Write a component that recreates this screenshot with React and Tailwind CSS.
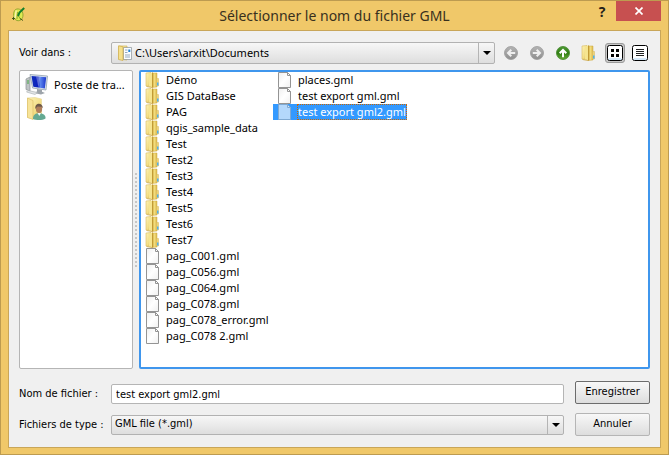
import React, { useState } from "react";

const folders = ["Démo", "GIS DataBase", "PAG", "qgis_sample_data", "Test", "Test2", "Test3", "Test4", "Test5", "Test6", "Test7"];
const files = ["pag_C001.gml", "pag_C056.gml", "pag_C064.gml", "pag_C078.gml", "pag_C078_error.gml", "pag_C078 2.gml"];
const moreFiles = ["places.gml", "test export gml.gml", "test export gml2.gml"];

function Gradients() {
  return (
    <svg className="absolute size-0" aria-hidden="true">
      <defs>
        <linearGradient id="gold" x1="0" x2="1" y1="0" y2="1">
          <stop offset="0" stopColor="#fdf3ba" />
          <stop offset="0.6" stopColor="#f3de85" />
          <stop offset="1" stopColor="#dcb84c" />
        </linearGradient>
        <linearGradient id="goldBack" x1="0" x2="1" y1="0" y2="0">
          <stop offset="0" stopColor="#c9a233" />
          <stop offset="0.5" stopColor="#f2dc7c" />
          <stop offset="1" stopColor="#d9b64a" />
        </linearGradient>
        <linearGradient id="paper" x1="0" x2="1" y1="0" y2="1">
          <stop offset="0" stopColor="#efefef" />
          <stop offset="0.5" stopColor="#ffffff" />
          <stop offset="1" stopColor="#f0f0f0" />
        </linearGradient>
        <linearGradient id="screen" x1="0" x2="1" y1="0" y2="0">
          <stop offset="0" stopColor="#1230b8" />
          <stop offset="0.45" stopColor="#0a1fc0" />
          <stop offset="0.6" stopColor="#5c86ee" />
          <stop offset="1" stopColor="#1a35cc" />
        </linearGradient>
        <linearGradient id="greyBall" x1="0" x2="0" y1="0" y2="1">
          <stop offset="0" stopColor="#b4b4b4" />
          <stop offset="1" stopColor="#8e8e8e" />
        </linearGradient>
        <linearGradient id="greenBall" x1="0" x2="0" y1="0" y2="1">
          <stop offset="0" stopColor="#4f9a35" />
          <stop offset="0.5" stopColor="#2f7d12" />
          <stop offset="1" stopColor="#69ab3a" />
        </linearGradient>
      </defs>
    </svg>
  );
}

function FolderIcon() {
  return (
    <svg viewBox="0 0 16 16" className="size-4 shrink-0" aria-hidden="true">
      <path d="M1 1 6 .5v14L1 14z" fill="url(#gold)" stroke="#d8bb5c" strokeWidth=".6" />
      <path d="M7 1h5v14l-5 .5z" fill="url(#goldBack)" stroke="#cfa940" strokeWidth=".5" />
      <path d="M11.500 6.500h2V14h-2z" fill="#ecd47a" stroke="#d6b65a" strokeWidth=".5" />
      <path d="M4 1.500 7.500 .5V15L4 14.500z" fill="#f6e590" />
      <path d="M7.500 .5V15.500" stroke="#bd9430" strokeWidth=".9" />
      <path d="M1.500 14.500 7 15.500" stroke="#cda845" strokeWidth=".8" />
      <path d="M12 10.500h1.500v3H12z" fill="#4db0ee" />
    </svg>
  );
}

function FileIcon({ selected = false }) {
  const edge = selected ? "#7fa9d2" : "#949494";
  return (
    <svg viewBox="0 0 16 16" className="size-4 shrink-0" aria-hidden="true">
      <path d="M1.500.5h9l3 3v12h-12z" fill={selected ? "#b4d8fc" : "url(#paper)"} stroke={edge} />
      <path d="M10.500.5v3h3z" fill={selected ? "#d2e8fe" : "#fff"} stroke={edge} />
    </svg>
  );
}

function DocumentsIcon() {
  return (
    <svg viewBox="0 0 16 16" className="size-4" aria-hidden="true">
      <path d="M2 1h8v14l-8-1z" fill="url(#gold)" stroke="#d3b456" strokeWidth=".7" />
      <path d="M6.500 2.500h8v12h-8z" fill="#fafdff" stroke="#8a9298" strokeWidth=".7" />
      <path d="M8 5h2.500M8 7.500h2.500M8 10h5M8 12h5" stroke="#8aa0b5" strokeWidth=".9" />
      <path d="M11.300 4.500h2v2.500h-2z" fill="#2385d5" />
      <path d="M1.500.8l4.500 1V15.500L1.500 14.500z" fill="#f5e08c" stroke="#cfac48" strokeWidth=".7" />
    </svg>
  );
}

function ComputerIcon() {
  return (
    <svg viewBox="0 0 24 24" className="size-6 shrink-0" aria-hidden="true">
      <path d="M1 6 5 4v14l-4-1.500z" fill="#bfc4c6" stroke="#8b9194" strokeWidth=".7" />
      <path d="M2 8h2M2 10h2" stroke="#43a640" />
      <path d="M5 1.500 22.500 3 21 17 7.500 15z" fill="#dbe3ed" stroke="#8796a6" strokeWidth=".7" />
      <path d="M6.500 3 21.200 4.300 19.800 15.400 8.300 13.700z" fill="url(#screen)" />
      <path d="M11 3.400 15.500 3.800 13.500 14.500z" fill="#fff" opacity=".3" />
      <path d="M12 16l5 .8v2l3 1.200-4 1.500-7-1.500 3-1.500z" fill="#9da4aa" />
      <path d="M3 17.500 12.500 19.500 10 21.500 1.500 19z" fill="#e2e5e7" stroke="#a5abad" strokeWidth=".6" />
    </svg>
  );
}

function UserIcon() {
  return (
    <svg viewBox="0 0 24 24" className="size-6 shrink-0" aria-hidden="true">
      <path d="M2.500 1 10 .5 16.500 2v17l-6.500 3-7.500-1.500z" fill="url(#gold)" stroke="#e8d794" strokeWidth=".6" />
      <path d="M2.500 1 8 3.500v19l-5.500-2z" fill="#f7e398" stroke="#d8ba60" strokeWidth=".6" />
      <path d="M8 22c-.3-4 2.300-5.800 6-5.800s7 1.600 6.500 5.300c-3 2-9 2-12.500.5z" fill="#64a992" />
      <path d="M12.500 16l1.800 3 1.700-3z" fill="#f4f7f5" />
      <ellipse cx="14" cy="12" rx="3.100" ry="4" fill="#b07f5b" />
      <path d="M10.400 12c-1.200-6.500 7.600-7 7.400-.5l-1.300-1.700-4-.3-1 1z" fill="#6d5849" />
    </svg>
  );
}

function AppIcon() {
  return (
    <svg viewBox="0 0 16 16" className="size-4" aria-hidden="true">
      <path d="M4.500 2.500C8 .8 12 3 12 8c0 4-3 6.500-6 5.500C2 12.500 1.500 5 4.500 2.500z" fill="#dcea52" stroke="#8fa22c" strokeWidth=".9" />
      <path d="M5.200 3.500 4 11" stroke="#f8f5b4" strokeWidth="1.400" />
      <path d="M6.500 5 6 12M7.500 9l2.500 4" stroke="#8fa22c" strokeWidth=".9" />
      <path d="M13.200 1 8.500 5.500 7 9" fill="none" stroke="#12802a" strokeWidth="2" />
      <path d="M1 11.500h3M2.500 10v3M9 11.500l3 2" stroke="#3b5214" strokeWidth=".9" />
    </svg>
  );
}

function ArrowBall({ direction }) {
  const turn = { left: "rotate(-90 8 8)", right: "rotate(90 8 8)", up: "rotate(0 8 8)" }[direction];
  const green = direction === "up";
  return (
    <svg viewBox="0 0 16 16" className="size-4" aria-hidden="true">
      <circle cx="8" cy="8" r="6.500" fill={green ? "url(#greenBall)" : "url(#greyBall)"} stroke={green ? "#3f8526" : "#9a9a9a"} strokeWidth=".8" />
      <path d="M8 12.200V5M4.700 8.300 8 5 11.300 8.300" transform={turn} fill="none" stroke={green ? "#fff" : "#efefef"} strokeWidth="2" />
    </svg>
  );
}

function Entry({ name, folder, selected, onSelect }) {
  return (
    <li className="flex">
      <button type="button" onClick={() => onSelect(name)} aria-pressed={selected} className={`flex h-4 items-center gap-1 pl-1 text-left ${selected ? "bg-[#3399ff] text-white" : ""}`}>
        {folder ? <FolderIcon /> : <FileIcon selected={selected} />}
        <span className={`h-4 px-px leading-4 whitespace-nowrap ${selected ? "outline-1 -outline-offset-1 outline-dotted outline-[#cc6600]" : ""}`}>{name}</span>
      </button>
    </li>
  );
}

function DropArrow() {
  return (
    <span className="pointer-events-none absolute inset-y-0 right-0 flex w-4 items-center justify-center border-l border-[#b4b4b4]">
      <svg viewBox="0 0 8 4" className="h-1 w-2" aria-hidden="true"><path d="M0 0h8L4 4z" fill="#000" /></svg>
    </span>
  );
}

const combo = "relative flex min-w-0 flex-1 items-center rounded-[2px] border border-[#b2b2b2] bg-linear-to-b from-[#f7f7f7] to-[#dedede]";
const toolButton = "flex w-[26px] justify-center";

export default function App() {
  const [name, setName] = useState("test export gml2.gml");
  const all = [...folders, ...files];
  return (
    <div className="flex min-h-screen flex-col border border-[#bd9b50] bg-[#f0c869] px-[7px] pb-[6px] font-['DejaVu_Sans_Condensed','DejaVu_Sans',sans-serif] text-[11px] text-black">
      <Gradients />
      <header className="flex h-[29px] shrink-0 items-start">
        <div className="flex w-20 pt-[6px] pl-[3px]"><AppIcon /></div>
        <h1 className="flex-1 text-center font-['Noto_Sans','Open_Sans',sans-serif] text-[14px] leading-[29px] text-[#38301e]">Sélectionner le nom du fichier GML</h1>
        <div className="flex w-20 justify-end">
          <button type="button" aria-label="Aide" className="flex h-5 w-7 items-center justify-center font-['Open_Sans',sans-serif] text-[14px] font-bold text-[#24201a]">?</button>
          <button type="button" aria-label="Fermer" className="flex h-5 w-[45px] items-center justify-center bg-[#c75050]">
            <svg viewBox="0 0 8 8" className="size-2" aria-hidden="true"><path d="M.5.5l7 7m0-7l-7 7" stroke="#fff" strokeWidth="1.700" /></svg>
          </button>
        </div>
      </header>
      <main className="flex flex-1 flex-col border border-[#c9a659] bg-[#f0f0f0] px-[10px] py-[11px]">
        <div className="flex h-[22px] items-center">
          <label htmlFor="place" className="w-[92px] shrink-0">Voir dans :</label>
          <div className={`h-[22px] ${combo}`}>
            <span className="ml-[5px] flex"><DocumentsIcon /></span>
            <select id="place" className="h-full min-w-0 flex-1 appearance-none bg-transparent pl-[2px] pr-5 font-['Noto_Sans','Open_Sans',sans-serif]">
              <option>C:\Users\arxit\Documents</option>
            </select>
            <DropArrow />
          </div>
          <div className="ml-[3px] flex shrink-0 items-center">
            <button type="button" aria-label="Précédent" className={toolButton}><ArrowBall direction="left" /></button>
            <button type="button" aria-label="Suivant" className={toolButton}><ArrowBall direction="right" /></button>
            <button type="button" aria-label="Dossier parent" className={toolButton}><ArrowBall direction="up" /></button>
            <button type="button" aria-label="Nouveau dossier" className={toolButton}><FolderIcon /></button>
            <button type="button" aria-label="Liste" aria-pressed="true" className="ml-[3px] flex size-5 items-center justify-center rounded-[3px] border border-[#9a9a9a] bg-[#c8c8c8]">
              <svg viewBox="0 0 16 16" className="size-4" aria-hidden="true"><rect x=".5" y=".5" width="15" height="15" rx="2" fill="#fff" stroke="#000" /><path d="M1.500 14h13" stroke="#acd3f4" /><path d="M4 4h3v3H4zm5 0h3v3H9zM4 9h3v3H4zm5 0h3v3H9z" /></svg>
            </button>
            <button type="button" aria-label="Détails" className="ml-[5px] flex size-5 items-center justify-center">
              <svg viewBox="0 0 16 16" className="size-4" aria-hidden="true"><rect x=".5" y=".5" width="15" height="15" rx="2" fill="#fff" stroke="#000" /><path d="M1.500 14h13" stroke="#acd3f4" /><path d="M4 4.500h8M4 6.500h8M4 8.500h8M4 10.500h8" stroke="#222" /></svg>
            </button>
          </div>
        </div>
        <div className="mt-[6px] flex flex-1 font-['Noto_Sans','Open_Sans',sans-serif] text-[11px]">
          <nav className="w-[114px] shrink-0 rounded-[2px] border border-[#b5b5b5] bg-white px-[5px] py-[2px]">
            <button type="button" className="flex h-6 w-full items-center gap-[5px] whitespace-nowrap"><ComputerIcon />Poste de tra...</button>
            <button type="button" className="flex h-6 w-full items-center gap-[5px] whitespace-nowrap"><UserIcon />arxit</button>
          </nav>
          <div className="flex w-[6px] shrink-0 flex-col items-center justify-center gap-[2px]" role="separator">
            {Array.from({ length: 24 }, (_, i) => <span key={i} className="size-[2px] bg-[#c6c6c6]" />)}
          </div>
          <div className="flex min-w-0 flex-1 rounded-[2px] border-2 border-[#3f96ed] bg-white">
            <ul className="w-[132px] shrink-0">
              {all.map((n, i) => <Entry key={n} name={n} folder={i < folders.length} selected={name === n} onSelect={setName} />)}
            </ul>
            <ul>
              {moreFiles.map((n) => <Entry key={n} name={n} selected={name === n} onSelect={setName} />)}
            </ul>
          </div>
        </div>
        <div className="mt-[12px] flex items-end">
          <label htmlFor="filename" className="w-[92px] shrink-0 leading-5">Nom de fichier :</label>
          <input id="filename" value={name} onChange={(e) => setName(e.target.value)} className="h-5 min-w-0 flex-1 rounded-[2px] border border-[#b5b5b5] bg-white px-1" />
          <button type="button" className="ml-[11px] h-[23px] w-[75px] rounded-[2px] border border-[#6c6c6c] bg-linear-to-b from-[#f8f8f8] to-[#dddddd]">Enregistrer</button>
        </div>
        <div className="mt-[9px] flex items-center">
          <label htmlFor="filetype" className="w-[92px] shrink-0 leading-5">Fichiers de type :</label>
          <div className={`h-5 ${combo}`}>
            <select id="filetype" className="h-full min-w-0 flex-1 appearance-none bg-transparent pl-[3px] pr-5"><option>GML file (*.gml)</option></select>
            <DropArrow />
          </div>
          <button type="button" className="ml-[11px] h-[23px] w-[75px] rounded-[2px] border border-[#b5b5b5] bg-linear-to-b from-[#f8f8f8] to-[#dddddd]">Annuler</button>
        </div>
      </main>
    </div>
  );
}
